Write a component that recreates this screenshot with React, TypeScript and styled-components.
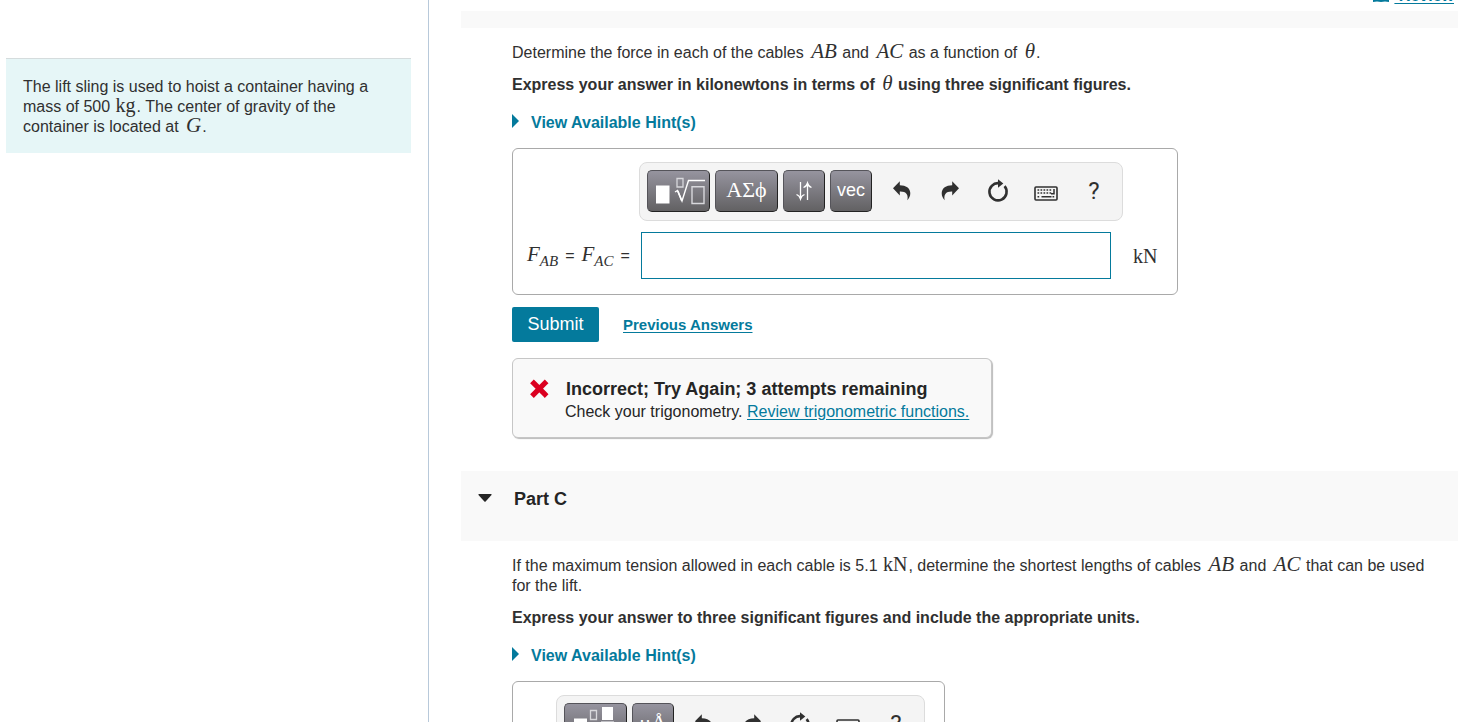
import React from "react";
import styled, { createGlobalStyle } from "styled-components";

const TEAL = "#047a9c";

const GlobalStyle = createGlobalStyle`
  * { box-sizing: border-box; }
  body {
    margin: 0;
    background: #fff;
    color: #303030;
    font-family: "Liberation Sans", Arial, sans-serif;
    font-size: 16px;
    line-height: 20px;
  }
  p, h2 { margin: 0; }
`;

const Page = styled.div`
  display: flex;
  height: 100vh;
  overflow: hidden;
`;

const Sidebar = styled.aside`
  flex: 0 0 429px;
  padding: 58px 17px 0 6px;
  border-right: 1px solid #b8c9da;
`;

const ProblemIntro = styled.p`
  padding: 18px 16px 16px 17px;
  border-top: 1px solid #d5dcdd;
  background: #e6f6f7;
`;

const Main = styled.main`
  flex: 1;
  min-width: 0;
  padding: 0 19px 0 32px;
  overflow: hidden;
`;

const TopLinks = styled.div`
  display: flex;
  justify-content: flex-end;
  align-items: flex-end;
  gap: 5px;
  height: 11px;
  padding: 0 4px 5px 0;

  svg { margin-bottom: 3px; }
`;

const TextLink = styled.a<{ $bold?: boolean; $size?: number }>`
  color: ${TEAL};
  font-size: ${(p) => p.$size ?? 16}px;
  font-weight: ${(p) => (p.$bold ? 700 : 400)};
  text-decoration: underline;
  text-underline-offset: 2px;
`;

const Band = styled.div`
  height: 17px;
  background: #f9f9f9;
`;

const PartHeader = styled.button`
  display: flex;
  align-items: flex-start;
  gap: 22px;
  width: 100%;
  height: 70px;
  padding: 18px 17px;
  border: 0;
  background: #f9f9f9;
  color: #252525;
  font: 700 18px/20px "Liberation Sans", Arial, sans-serif;
  text-align: left;

  svg { margin-top: 5px; }
`;

const PartBody = styled.section`
  display: flex;
  flex-direction: column;
  align-items: flex-start;
  gap: 12px;
  padding: 15px 16px 0 51px;
`;

const Instruction = styled.p`
  font-weight: 700;
`;

const HintToggle = styled.button`
  display: flex;
  align-items: center;
  gap: 12px;
  margin: 6px 0 3px;
  padding: 0;
  border: 0;
  background: none;
  color: ${TEAL};
  font: 700 16px/20px "Liberation Sans", Arial, sans-serif;

  svg { margin-bottom: 5px; }
`;

const Math = styled.span`
  margin: 0 1px;
  font-family: "Liberation Serif", "Times New Roman", serif;
  font-size: 20px;
  font-weight: 400;
  line-height: 16px;
`;

const Variable = styled(Math)`
  margin: 0 1px 0 3px;
  font-size: 21px;
  font-style: italic;
`;

const Sub = styled.sub`
  font-size: 15px;
  line-height: 0;
  vertical-align: -5px;
`;

const AnswerBox = styled.div<{ $inset: number; $minHeight?: number }>`
  flex: none;
  min-height: ${(p) => p.$minHeight ?? 0}px;
  padding: 13px 19px 15px 14px;
  border: 1px solid #a9a9a9;
  border-radius: 6px;

  > [role="toolbar"] { margin-left: ${(p) => p.$inset}px; }
`;

const Toolbar = styled.div`
  display: flex;
  width: fit-content;
  gap: 5px;
  padding: 7px 4px 8px 7px;
  border: 1px solid #dcdcdc;
  border-radius: 8px;
  background: #f4f4f4;
`;

const PaletteButton = styled.button<{ $wide?: boolean; $serif?: number }>`
  display: flex;
  align-items: center;
  justify-content: center;
  width: ${(p) => (p.$wide ? 63 : 42)}px;
  height: 42px;
  padding: 0 0 2px;
  border: 1px solid #55545a;
  border-right-color: #222;
  border-bottom-color: #222;
  border-radius: 5px;
  background: linear-gradient(#96949f, #626163);
  color: #fff;
  font: ${(p) => (p.$serif ? `${p.$serif}px/24px "Liberation Serif", serif` : '18px/24px "Liberation Sans", sans-serif')};

  svg { flex: none; margin-bottom: -2px; }
`;

const ActionGroup = styled.div`
  display: flex;
  margin-left: 1px;
`;

const ActionButton = styled.button`
  display: flex;
  align-items: center;
  justify-content: center;
  width: 48px;
  height: 42px;
  padding: 0;
  border: 0;
  background: none;
  color: #303030;
  font: 24px/24px Roboto, sans-serif;
`;

const AnswerRow = styled.div`
  display: flex;
  align-items: center;
  margin-top: 11px;
`;

const AnswerLabel = styled.label`
  display: flex;
  flex: 0 0 114px;
  align-items: baseline;
  gap: 7px;
  white-space: nowrap;

  ${Variable} { margin: 0; }
`;

const AnswerInput = styled.input`
  width: 470px;
  height: 47px;
  margin-right: 21px;
  padding: 0 8px;
  border: 1px solid ${TEAL};
  background: #fff;
  font: inherit;
`;

const Actions = styled.div`
  display: flex;
  align-items: center;
  gap: 24px;
`;

const SubmitButton = styled.button`
  width: 87px;
  height: 35px;
  padding: 0 0 2px;
  border: 0;
  border-radius: 2px;
  background: ${TEAL};
  color: #fff;
  font: 18px/20px "Liberation Sans", Arial, sans-serif;
`;

const Feedback = styled.div`
  display: flex;
  gap: 16px;
  margin: 4px 0 33px;
  padding: 20px 22px 15px 17px;
  border: 1px solid #c6c6c6;
  border-radius: 6px;
  background: #f9f9f9;
  box-shadow: 1px 1px 1px #bbb;
  color: #252525;

  > svg { flex: none; }
`;

const FeedbackTitle = styled.p`
  margin-bottom: 3px;
  padding-left: 1px;
  font-size: 18px;
  font-weight: 700;
`;

const RightCaret = () => (
  <svg width="7" height="14" viewBox="0 0 7 14" fill={TEAL} aria-hidden="true">
    <path d="M0 0l7 7-7 7z" />
  </svg>
);

const DownCaret = () => (
  <svg width="14" height="8" viewBox="0 0 14 8" fill="#252525" aria-hidden="true">
    <path d="M1 0h12q1 0 .5 1L7.6 7.5q-.6.6-1.200 0L.5 1Q0 0 1 0z" />
  </svg>
);

const CrossIcon = () => (
  <svg width="19" height="19" viewBox="0 0 19 19" aria-label="Incorrect">
    <path d="M3.800 4.200l11 11M14.800 4.200l-11 11" stroke="#db0020" strokeWidth="5.200" strokeLinecap="square" />
  </svg>
);

const BookIcon = () => (
  <svg width="16" height="16" viewBox="0 0 16 16" fill={TEAL} aria-hidden="true">
    <path d="M0 3q4-2 8 0 4-2 8 0v12q-4-1-8 0-4-1-8 0z" />
  </svg>
);

const RootIcon = () => (
  <svg width="61" height="42" viewBox="1 0 61 42" fill="none" stroke="#fff" aria-hidden="true">
    <path d="M9 15.500h13.500v18H9z" fill="#fff" stroke="none" />
    <path d="M30 8.500h6v8.500h-6z" stroke="#d8d8dc" strokeWidth="1.300" />
    <path d="M28 22l2.500-1.500 4.500 10.500 6.500-20.500h16.500" strokeWidth="1.400" />
    <path d="M30.800 21l3.800 9.500" strokeWidth="1.600" />
    <path d="M45 16.700h12V33.500H45z" stroke="#d8d8dc" strokeWidth="1.400" />
  </svg>
);

const FractionIcon = () => (
  <svg width="61" height="42" viewBox="1 0 61 42" fill="none" stroke="#fff" aria-hidden="true">
    <path d="M10 15.500H23v17H10zM38 4h11v13H38zM38 22h11v13H38z" fill="#fff" stroke="none" />
    <path d="M26.500 7.500h6v9h-6z" stroke="#d8d8dc" strokeWidth="1.300" />
    <path d="M37 19h13" />
  </svg>
);

const ArrowsIcon = () => (
  <svg width="20" height="22" viewBox="0 0 20 22" fill="none" stroke="#fff" strokeWidth="1.300" aria-hidden="true">
    <path d="M6.500 2v17M2.500 14.500q3 1 4 4.500 1-3.500 4-4.500M13.500 20V3M9.500 7.500q3-1 4-4.500 1 3.500 4 4.500" />
  </svg>
);

const UndoIcon = ({ flip = false }: { flip?: boolean }) => (
  <svg width="24" height="24" viewBox="0 0 24 24" fill="#303030" aria-hidden="true">
    <path
      transform={flip ? "matrix(-1 0 0 1 24 0)" : undefined}
      d="M3 9.300L9.800 2.200V6.300C16 6.500 20 9 20.300 14c.1 3-1.300 5.500-3 7.300.4-2 .7-4.300-.7-6.300-1.300-1.900-3.600-2.600-6.800-2.500V16.500z"
    />
  </svg>
);

const ResetIcon = () => (
  <svg width="24" height="24" viewBox="0 0 24 24" aria-hidden="true">
    <path d="M13 4.200A8.600 8.600 0 1 0 18.600 7.200" fill="none" stroke="#303030" strokeWidth="2.600" />
    <path d="M12 .3l5.300 4.200-5.300 4.200z" fill="#303030" />
  </svg>
);

const KeyboardIcon = () => (
  <svg width="24" height="24" viewBox="0 0 24 24" fill="none" stroke="#303030" aria-hidden="true">
    <rect x="1" y="8" width="22" height="13" rx="1" strokeWidth="1.600" />
    <path d="M3.500 11h14M3.500 14h14M3.500 17.700h3M18.500 17.700h2" strokeWidth="1.600" strokeDasharray="1.700 1.300" />
    <path d="M7.500 17.700h10M20 10v4.800h-3" strokeWidth="1.500" />
  </svg>
);

const ToolbarActions = () => (
  <ActionGroup>
    <ActionButton aria-label="Undo"><UndoIcon /></ActionButton>
    <ActionButton aria-label="Redo"><UndoIcon flip /></ActionButton>
    <ActionButton aria-label="Reset"><ResetIcon /></ActionButton>
    <ActionButton aria-label="Keyboard shortcuts"><KeyboardIcon /></ActionButton>
    <ActionButton aria-label="Help">?</ActionButton>
  </ActionGroup>
);

const Hint = () => (
  <HintToggle>
    <RightCaret />
    View Available Hint(s)
  </HintToggle>
);

export default function App() {
  return (
    <Page>
      <GlobalStyle />
      <Sidebar>
        <ProblemIntro>
          The lift sling is used to hoist a container having a mass of 500 <Math>kg</Math>. The
          center of gravity of the container is located at <Variable>G</Variable>.
        </ProblemIntro>
      </Sidebar>
      <Main>
        <TopLinks>
          <BookIcon />
          <TextLink href="#review" $bold>{"\u00a0Review"}</TextLink>
        </TopLinks>
        <Band />
        <PartBody>
          <p>
            Determine the force in each of the cables <Variable>AB</Variable> and{" "}
            <Variable>AC</Variable> as a function of <Variable>θ</Variable>.
          </p>
          <Instruction>
            Express your answer in kilonewtons in terms of <Variable>θ</Variable> using three
            significant figures.
          </Instruction>
          <Hint />
          <AnswerBox $inset={112}>
            <Toolbar role="toolbar">
              <PaletteButton $wide aria-label="Templates"><RootIcon /></PaletteButton>
              <PaletteButton $wide $serif={22}>ΑΣϕ</PaletteButton>
              <PaletteButton aria-label="Subscripts and arrows"><ArrowsIcon /></PaletteButton>
              <PaletteButton>vec</PaletteButton>
              <ToolbarActions />
            </Toolbar>
            <AnswerRow>
              <AnswerLabel htmlFor="force">
                <Variable>F<Sub>AB</Sub></Variable>
                <span>=</span>
                <Variable>F<Sub>AC</Sub></Variable>
                <span>=</span>
              </AnswerLabel>
              <AnswerInput id="force" type="text" />
              <Math>kN</Math>
            </AnswerRow>
          </AnswerBox>
          <Actions>
            <SubmitButton>Submit</SubmitButton>
            <TextLink href="#previous" $bold $size={15}>Previous Answers</TextLink>
          </Actions>
          <Feedback>
            <CrossIcon />
            <div>
              <FeedbackTitle>Incorrect; Try Again; 3 attempts remaining</FeedbackTitle>
              <p>
                Check your trigonometry.{" "}
                <TextLink href="#trigonometry">Review trigonometric functions.</TextLink>
              </p>
            </div>
          </Feedback>
        </PartBody>
        <PartHeader aria-expanded="true">
          <DownCaret />
          Part C
        </PartHeader>
        <PartBody>
          <p>
            If the maximum tension allowed in each cable is 5.1 <Math>kN</Math>, determine the
            shortest lengths of cables <Variable>AB</Variable> and <Variable>AC</Variable> that can
            be used for the lift.
          </p>
          <Instruction>
            Express your answer to three significant figures and include the appropriate units.
          </Instruction>
          <Hint />
          <AnswerBox $inset={29} $minHeight={147}>
            <Toolbar role="toolbar">
              <PaletteButton $wide aria-label="Templates"><FractionIcon /></PaletteButton>
              <PaletteButton $serif={22}>μÅ</PaletteButton>
              <ToolbarActions />
            </Toolbar>
          </AnswerBox>
        </PartBody>
      </Main>
    </Page>
  );
}
